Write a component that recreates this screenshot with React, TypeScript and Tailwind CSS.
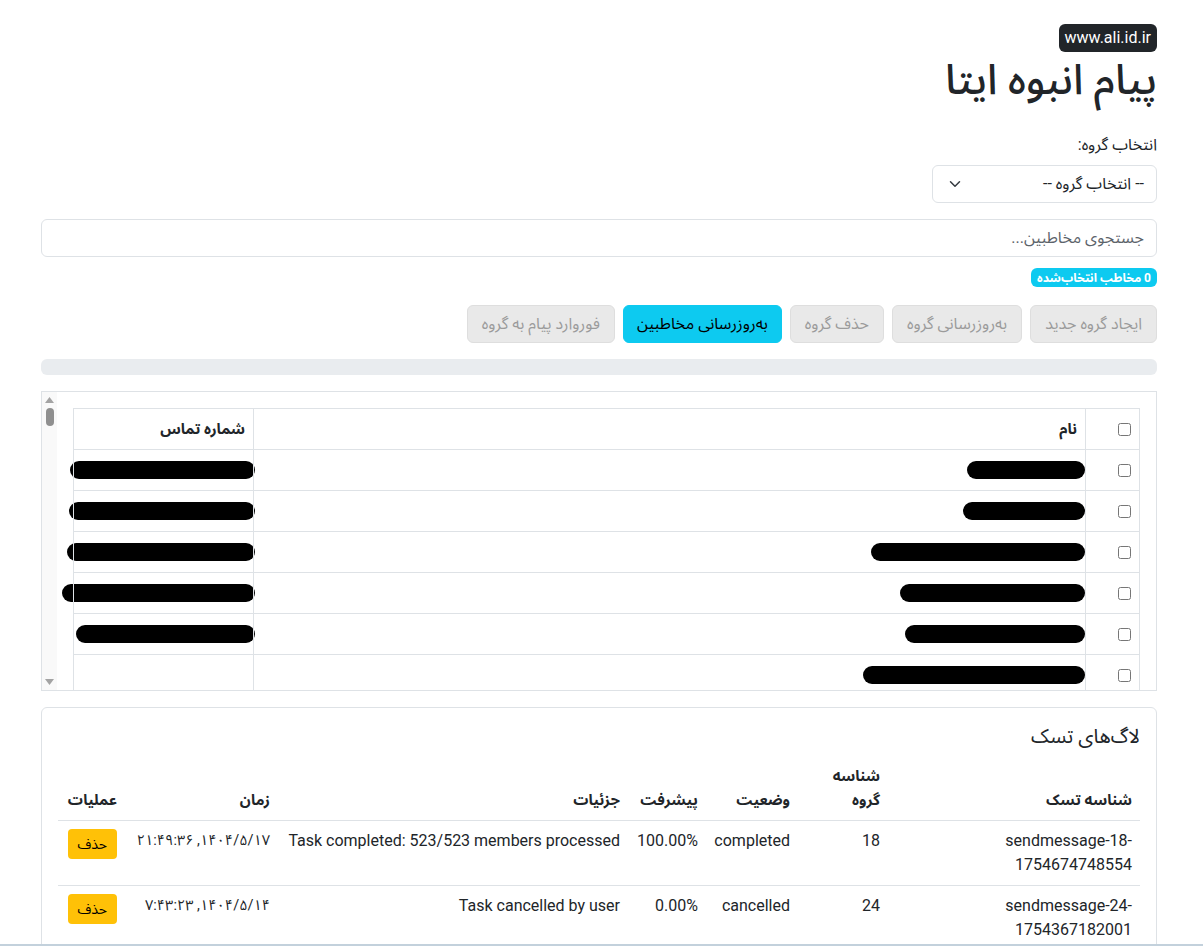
import React from 'react';

const FONT = { fontFamily: 'Roboto, "Noto Sans Arabic", "DejaVu Sans", sans-serif' };

const nameBars = [118, 122, 214, 185, 180, 222];
const phoneBars = [185, 186, 188, 193, 179, 0];

const contacts = Array.from({ length: 20 }, (_, i) => ({
  id: i,
  name: nameBars[i] ?? 120 + ((i * 37) % 110),
  phone: i < phoneBars.length ? phoneBars[i] : 180 + ((i * 13) % 12),
}));

const logs = [
  {
    id: 'sendmessage-18-1754674748554',
    group: '18',
    status: 'completed',
    progress: '100.00%',
    details: 'Task completed: 523/523 members processed',
    time: '۱۴۰۴/۵/۱۷, ۲۱:۴۹:۳۶',
  },
  {
    id: 'sendmessage-24-1754367182001',
    group: '24',
    status: 'cancelled',
    progress: '0.00%',
    details: 'Task cancelled by user',
    time: '۱۴۰۴/۵/۱۴, ۷:۴۳:۲۳',
  },
];

function ActionButton({ label, active }: { label: string; active?: boolean }) {
  return (
    <button
      className={
        active
          ? 'h-[38px] px-[13px] rounded-md border border-[#0dcaf0] bg-[#0dcaf0] text-[16px] text-black'
          : 'h-[38px] px-[14px] rounded-md border border-[#dedede] bg-[#e9e9e9] text-[16px] text-[#9b9b9b]'
      }
    >
      {label}
    </button>
  );
}

// fake classic scrollbar drawn on the left side of the contacts box
function ScrollTrack() {
  return (
    <div className="flex w-[15px] shrink-0 flex-col items-center bg-[#f9f9f9] py-[4px]">
      <svg width="9" height="6" viewBox="0 0 9 6" className="mt-[1px]">
        <path d="M4.5 0L9 6H0z" fill="#a3a3a3" />
      </svg>
      <div className="mt-[5px] h-[18px] w-[8px] rounded-full bg-[#8f8f8f]" />
      <div className="flex-1" />
      <svg width="9" height="6" viewBox="0 0 9 6" className="mb-[1px]">
        <path d="M0 0H9L4.5 6z" fill="#a3a3a3" />
      </svg>
    </div>
  );
}

export default function App() {
  return (
    <div dir="rtl" style={FONT} className="min-h-screen bg-white text-[#212529]">
      <div className="mr-[46px] w-[1116px] pt-6 pb-10">
        <span className="inline-flex h-[28px] items-center rounded-md bg-[#212529] px-[6px] text-[16px] text-white">
          <span dir="ltr">www.ali.id.ir</span>
        </span>
        <h1 className="mt-1 text-[42px] leading-[48px] font-medium">پیام انبوه ایتا</h1>

        <div className="mt-[29px] text-[16px] leading-6">انتخاب گروه:</div>
        <div className="mt-2 flex h-[38px] w-[225px] items-center justify-between rounded-md border border-[#dee2e6] px-3 text-[16px]">
          <span>-- انتخاب گروه --</span>
          <svg width="12" height="12" viewBox="0 0 16 16" fill="none" stroke="#343a40" strokeWidth="2" strokeLinecap="round" strokeLinejoin="round" className="ml-1">
            <path d="M2 5l6 6 6-6" />
          </svg>
        </div>

        <div className="mt-4 flex h-[38px] items-center rounded-md border border-[#dee2e6] px-3 text-[16px] text-[#5c636a]">
          جستجوی مخاطبین...
        </div>

        <div className="mt-[11px] flex">
          <span className="inline-flex h-[19px] items-center rounded-md bg-[#0dcaf0] px-[6px] text-[12px] font-bold text-white">
            0 مخاطب انتخاب‌شده
          </span>
        </div>

        <div className="mt-[18px] flex gap-2">
          <ActionButton label="ایجاد گروه جدید" />
          <ActionButton label="به‌روزرسانی گروه" />
          <ActionButton label="حذف گروه" />
          <ActionButton label="به‌روزرسانی مخاطبین" active />
          <ActionButton label="فوروارد پیام به گروه" />
        </div>

        <div className="mt-4 h-4 rounded-md bg-[#e9ecef]" />

        <div className="mt-4 flex h-[300px] border border-[#dee2e6]">
          <div className="min-w-0 flex-1 overflow-hidden p-4">
            <table className="w-full table-fixed border-collapse text-[15px]">
              <colgroup>
                <col className="w-[54px]" />
                <col />
                <col className="w-[180px]" />
              </colgroup>
              <thead>
                <tr className="h-[41px]">
                  <th className="border border-[#dee2e6] px-2 text-right align-middle">
                    <input type="checkbox" className="h-[13px] w-[13px] align-middle" />
                  </th>
                  <th className="border border-[#dee2e6] px-2 text-right font-bold">نام</th>
                  <th className="border border-[#dee2e6] px-2 text-right font-bold">شماره تماس</th>
                </tr>
              </thead>
              <tbody>
                {contacts.map((c) => (
                  <tr key={c.id} className="h-[41px]">
                    <td className="border border-[#dee2e6] px-2 text-right align-middle">
                      <input type="checkbox" className="h-[13px] w-[13px] align-middle" />
                    </td>
                    <td className="border border-[#dee2e6] px-0 align-middle">
                      <div className="h-[18px] rounded-full bg-black" style={{ width: c.name }} />
                    </td>
                    <td className="border border-[#dee2e6] px-0 align-middle">
                      {c.phone > 0 && (
                        <div className="-mr-[2px] h-[18px] rounded-full bg-black" style={{ width: c.phone }} />
                      )}
                    </td>
                  </tr>
                ))}
              </tbody>
            </table>
          </div>
          <ScrollTrack />
        </div>

        <div className="mt-4 rounded-md border border-[#dee2e6] p-4">
          <h5 className="mb-2 text-[20px] leading-6">لاگ‌های تسک</h5>
          <table className="w-full table-fixed border-collapse text-[16px] leading-6">
            <colgroup>
              <col className="w-[252px]" />
              <col className="w-[90px]" />
              <col className="w-[92px]" />
              <col className="w-[78px]" />
              <col className="w-[350px]" />
              <col className="w-[153px]" />
              <col className="w-[67px]" />
            </colgroup>
            <thead>
              <tr className="border-b border-[#dee2e6]">
                {['شناسه تسک', 'شناسه گروه', 'وضعیت', 'پیشرفت', 'جزئیات', 'زمان', 'عملیات'].map((h) => (
                  <th key={h} className="p-2 text-right align-bottom text-[15px] font-bold">
                    {h}
                  </th>
                ))}
              </tr>
            </thead>
            <tbody>
              {logs.map((l) => (
                <tr key={l.id} className="border-b border-[#dee2e6]">
                  <td className="p-2 align-top">{l.id}</td>
                  <td className="p-2 align-top">{l.group}</td>
                  <td className="p-2 align-top">{l.status}</td>
                  <td className="p-2 align-top">{l.progress}</td>
                  <td className="p-2 align-top">{l.details}</td>
                  <td className="p-2 align-top whitespace-nowrap text-[14.5px]">{l.time}</td>
                  <td className="p-2 align-top">
                    <button className="h-[30px] rounded bg-[#ffc107] px-[10px] text-[14px] text-black">حذف</button>
                  </td>
                </tr>
              ))}
            </tbody>
          </table>
        </div>
      </div>
      <div className="fixed inset-x-0 bottom-0 h-[2px] bg-[#c3d1dc]" />
    </div>
  );
}
